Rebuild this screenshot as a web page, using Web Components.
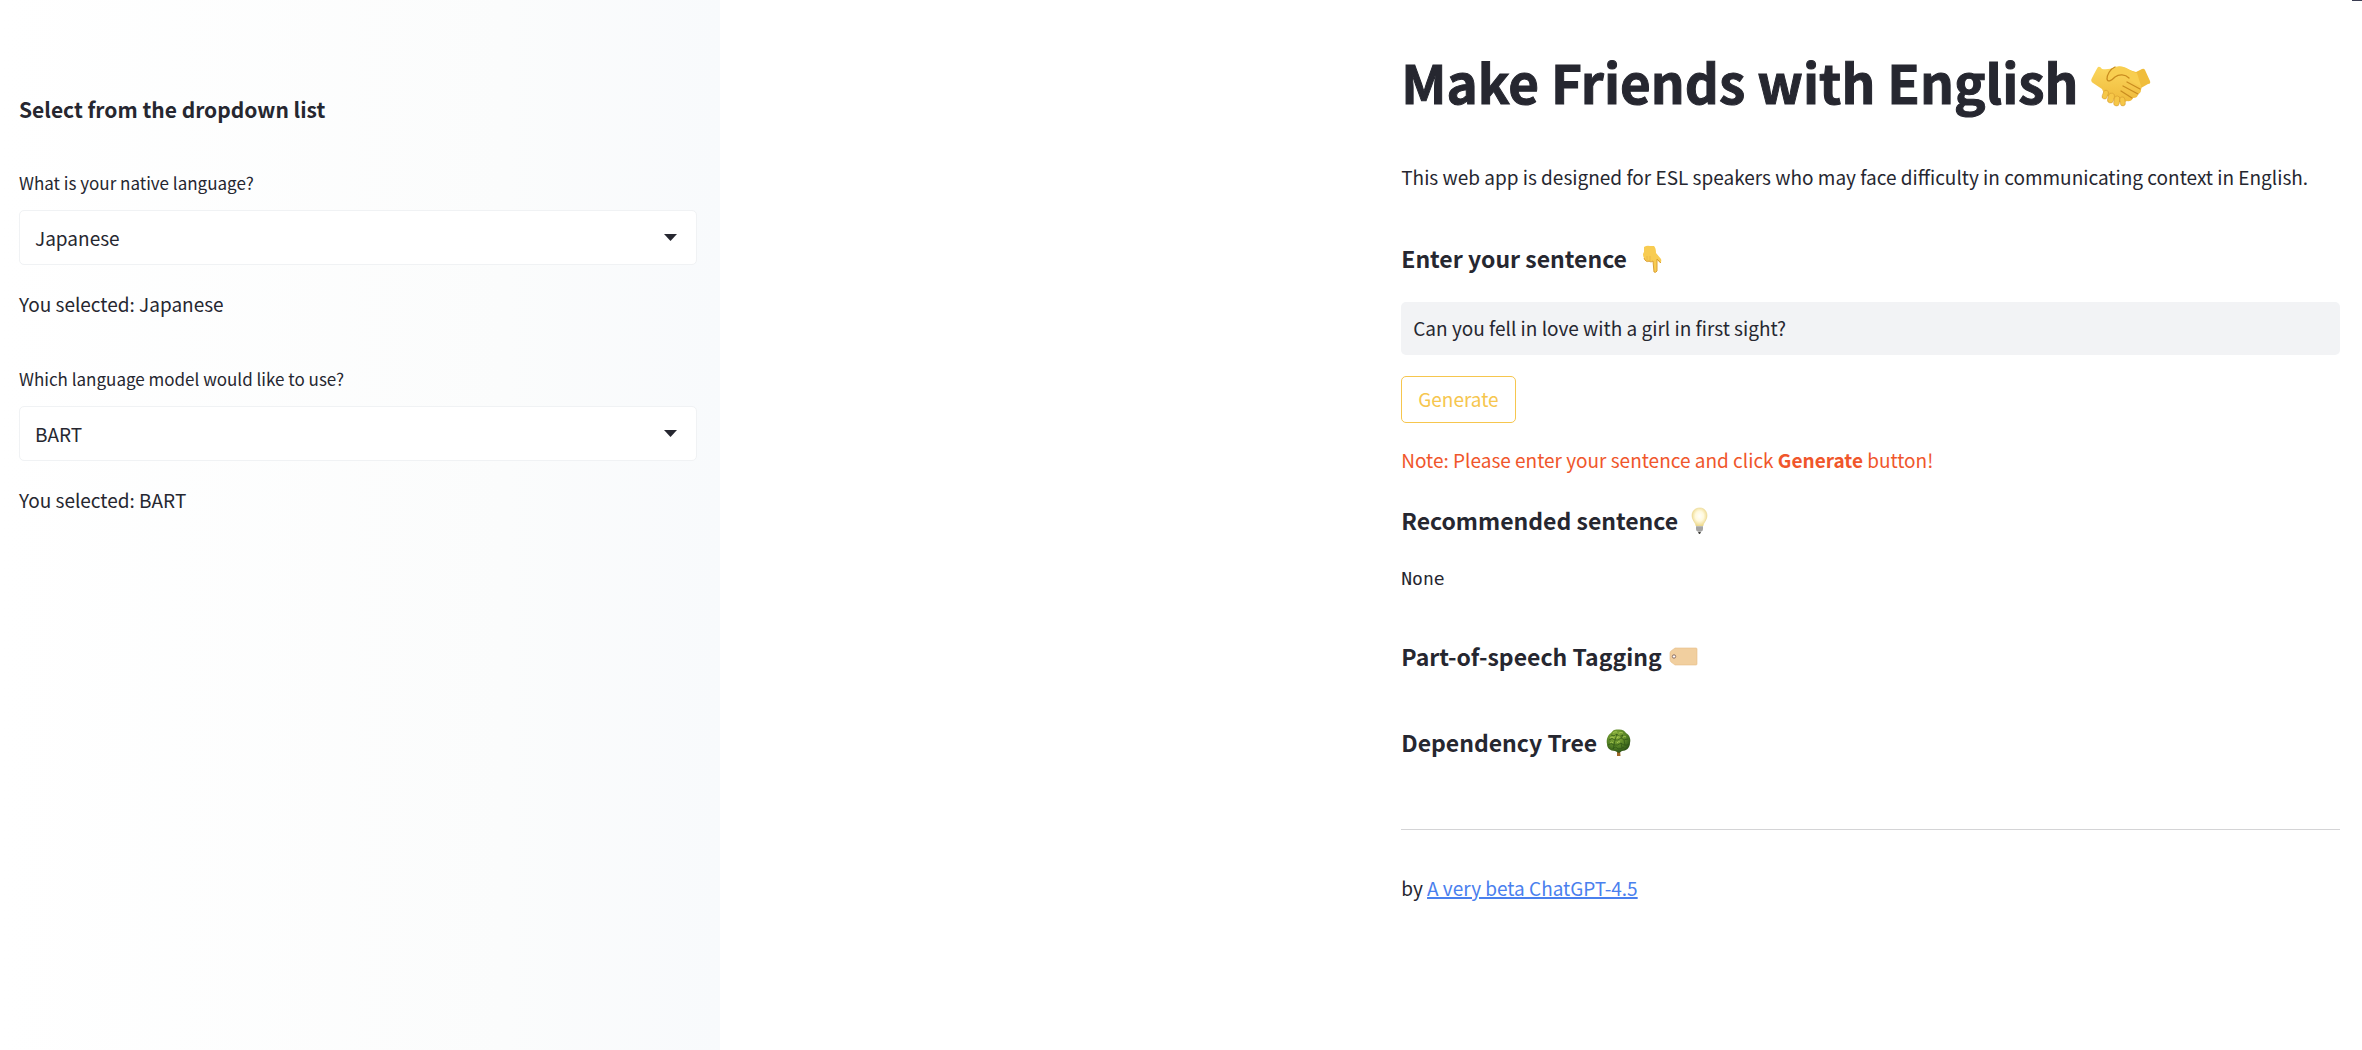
<!DOCTYPE html>
<html lang="en">
<head>
<meta charset="utf-8">
<title>Make Friends with English</title>
<style>
  html, body { margin: 0; min-height: 100%; }
  body {
    --ink: #262730;
    --gutter: 22px;
    background: #fff;
    color: var(--ink);
    font: 400 19px/32px "Noto Sans CJK JP", "Noto Sans", sans-serif;
  }
</style>
</head>
<body>
<friends-app></friends-app>

<script>
const ICONS = {
  handshake: `
    <defs><linearGradient id="g" x1="0" y1="0" x2="0" y2="1"><stop offset="0" stop-color="#fbd75e"/><stop offset="1" stop-color="#efb93a"/></linearGradient></defs>
    <path d="M35 13 45 16 51 13Q53 12 54 14L59 25Q60 28 57 28L50 32 48 36 38 32Z" fill="#f0bd3c"/>
    <path d="M1 22Q5 14 7 11Q9 10 11 13 18 14 24 11Q30 9 36 13L45 18 46 27Q52 30 50 34 50 37 47 38 47 42 42 42 40 46 36 45 33 47 28 46L15 39Q12 37 11 33L2 27Q-1 25 1 22Z" fill="url(#g)"/>
    <path d="M16 23C18 17 22 12 27 11 34 9 38 15 46 17L50 30C42 29 38 20 31 19 27 19 24 21 20 24Q16 26 16 23Z" fill="#f8ce50"/>
    <path d="M24 11C19 13 16 19 16 23 17 27 21 24 24 21 28 18 34 18 38 22M36 26 49 33M32 30 47 38M30 35 41 42" fill="none" stroke="#c98c1f" stroke-width="1.3" stroke-linecap="round"/>
    <g fill="#f6c748" stroke="#cf952a" stroke-width=".5"><rect x="12" y="34" width="5" height="9" rx="2.5" transform="rotate(20 14 38)"/><rect x="17" y="37" width="6" height="10" rx="3" transform="rotate(15 20 42)"/><rect x="23" y="40" width="5.5" height="10" rx="2.7" transform="rotate(8 26 45)"/><rect x="29" y="41" width="5" height="9" rx="2.5" transform="rotate(-8 31 45)"/></g>`,
  point: `
    <g transform="translate(4 0)"><path d="M5 2Q8 0 11 1L15 1Q17 3 17 8L22 14Q23 17 21 18L18 15 18 26Q17 28 15 27L14 16Q6 18 5 13 3 9 5 7Z" fill="#f8cc52"/>
    <path d="M5 13Q7 18 10 16 12 18 14 16L15 27Q17 28 18 26L18 14 22 18" fill="none" stroke="#dba034" stroke-width="1"/>
    <path d="M8 11V16M11 11V16" stroke="#e8b548" stroke-width=".8"/></g>`,
  bulb: `
    <defs><radialGradient id="g" cx=".5" cy=".45" r=".55"><stop offset="0" stop-color="#fffefa"/><stop offset=".5" stop-color="#fff9dc"/><stop offset="1" stop-color="#eed88b"/></radialGradient></defs>
    <path d="M14 1C9 1 6 4 6 9 6 13 10 16 10 19H17C17 16 21 13 21 9 21 4 18 1 14 1Z" fill="url(#g)" stroke="#ead68f" stroke-width=".6"/>
    <path d="M10 19H17V23L15 25H12L10 23Z" fill="#b9b9b7"/><path d="M10 21H17M10.500 23H16.500" stroke="#858585" stroke-width=".8"/><path d="M12 25H15L14 27H13Z" fill="#44433f"/>`,
  tag: `
    <path d="M5 5H26Q27 5 27 6V21Q27 22 26 22H5L1 19Q0 18 0 16V10Q0 9 1 8Z" fill="#f1cf9f" stroke="#e6bd88" stroke-width=".6"/>
    <circle cx="4" cy="13.500" r="1.700" fill="#fff" stroke="#8d6d60" stroke-width="1"/>`,
  tree: `
    <defs><radialGradient id="g" cx=".4" cy=".3" r=".75"><stop offset="0" stop-color="#91b63e"/><stop offset=".6" stop-color="#527f24"/><stop offset="1" stop-color="#254912"/></radialGradient></defs>
    <path d="M12 21H15L15.500 27H12Z" fill="#a0682a"/>
    <path d="M13 .5C17 0 20 2 21 4 25 6 26 11 25 14 25 19 21 22 17 22L14 24 10 22C5 22 2 19 2 15 1 10 3 6 6 4 8 1 10 0 13 .5Z" fill="url(#g)"/>
    <g fill="none" stroke="#2c5314" stroke-width=".7"><path d="M6 6Q9 8 12 5 13 9 18 6M4 11Q7 8 10 11 13 12 16 9 19 12 23 10M3 16Q6 13 9 16 13 17 16 14 20 18 24 15M8 20Q10 16 13 20 17 20 19 18M12 5 10 11M18 6 16 9M9 16 8 20M16 14 17 19M10 11 9 16M19 11 20 16"/></g>
    <g fill="none" stroke="#b0cf59" stroke-width=".8"><path d="M8 4Q10 2 12 3M14 4Q16 3 18 4M5 9Q7 7 9 9M12 9Q13 7 15 8M5 14Q7 12 8 14M12 14Q13 12 15 13M18 8Q20 7 21 8"/></g>`
};

const define = (name, html, setup) => {
  const template = document.createElement("template");
  template.innerHTML = `<style>*{box-sizing:border-box}:host{display:block}</style>` + html;
  customElements.define(name, class extends HTMLElement {
    connectedCallback() {
      if (this.shadowRoot) return;
      const root = this.attachShadow({ mode: "open" });
      root.append(template.content.cloneNode(true));
      if (setup) setup(this, root);
    }
  });
};

define("emoji-icon", `
  <style>
    :host { display: inline-block; width: 27px; height: 27px; margin-left: 3px; vertical-align: -4px; line-height: 0; }
    :host([name="handshake"]) { width: 60px; height: 60px; margin-left: 0; vertical-align: -12px; }
    svg { width: 100%; height: 100%; display: block; overflow: visible; }
  </style>
  <svg aria-hidden="true"></svg>`,
  (host, root) => {
    const name = host.getAttribute("name");
    const svg = root.querySelector("svg");
    svg.setAttribute("viewBox", name === "handshake" ? "0 0 60 60" : "0 0 27 27");
    svg.innerHTML = ICONS[name];
  });

define("page-title", `
  <style>h1 { margin: 0; font-size: 53px; line-height: 72px; font-weight: 700; -webkit-text-stroke: 1px currentColor; }</style>
  <h1><slot></slot></h1>`);

define("section-heading", `
  <style>h2 { margin: 0; font-size: 23px; line-height: 32px; font-weight: 700; }</style>
  <h2><slot></slot></h2>`);

define("select-field", `
  <style>
    label { display: block; font-size: 17px; line-height: 24px; margin-bottom: 15px; }
    .box { display: grid; align-items: center; margin-bottom: 23px; }
    select, svg { grid-area: 1 / 1; }
    select {
      appearance: none; width: 100%; height: 55px; margin: 0; padding: 0 40px 0 15px;
      border: 1px solid #f0f2f4; border-radius: 5px; background: #fff;
      color: inherit; font: inherit;
    }
    svg { justify-self: end; margin-right: 20px; width: 13px; height: 7px; pointer-events: none; }
    p { margin: 0; }
  </style>
  <label for="choice"></label>
  <div class="box">
    <select id="choice"></select>
    <svg viewBox="0 0 13 7" aria-hidden="true"><path d="M0 0H13L6.500 7Z" fill="#262730"/></svg>
  </div>
  <p>You selected: <span></span></p>`,
  (host, root) => {
    root.querySelector("label").textContent = host.getAttribute("label");
    const select = root.querySelector("select");
    const output = root.querySelector("span");
    select.add(new Option(host.getAttribute("value")));
    output.textContent = select.value;
    select.addEventListener("change", () => { output.textContent = select.value; });
  });

define("side-panel", `
  <style>
    :host { padding: 93px 23px 40px 19px; background: linear-gradient(90deg, #fff, #fbfcfc 70%, #f8fafc); }
    h2 { margin: 0 0 46px; font-size: 21px; line-height: 32px; font-weight: 700; }
    .fields { display: grid; gap: 47px; }
  </style>
  <h2>Select from the dropdown list</h2>
  <div class="fields">
    <select-field label="What is your native language?" value="Japanese"></select-field>
    <select-field label="Which language model would like to use?" value="BART"></select-field>
  </div>`);

define("sentence-form", `
  <style>
    form { margin: 0; display: flex; flex-direction: column; align-items: flex-start; gap: 21px; }
    input, button { font: inherit; margin: 0; border-radius: 5px; }
    input { width: 100%; height: 53px; padding: 0 12px 2px; border: 0; background: #f2f3f5; color: inherit; }
    button { height: 47px; padding: 0 16px 2px; border: 1px solid #f6c64e; background: #fff; color: #f6c64e; }
  </style>
  <form onsubmit="return false">
    <input type="text" aria-label="Enter your sentence" value="Can you fell in love with a girl in first sight?">
    <button type="submit">Generate</button>
  </form>`);

define("main-panel", `
  <style>
    :host { padding: 45px var(--gutter); }
    .columns { display: grid; grid-template-columns: 659fr 939fr; }
    .content { grid-column: 2; min-width: 0; }
    p { margin: 0; }
    .intro { margin: 44px 0 49px; }
    sentence-form { margin: 28px 0 21px; }
    .note { margin-bottom: 28px; color: #f0562b; }
    .result { margin: 31px 0 49px; font: 18px/24px "DejaVu Sans Mono", monospace; }
    .tagging { margin-bottom: 54px; }
    hr { margin: 71px 0 42px; border: 0; border-top: 1px solid #d4d4d6; }
    a { color: #4a80ee; text-decoration: underline; text-decoration-thickness: 2px; }
  </style>
  <div class="columns">
    <div class="content">
      <page-title>Make Friends with English <emoji-icon name="handshake"></emoji-icon></page-title>
      <p class="intro">This web app is designed for ESL speakers who may face difficulty in communicating context in English.</p>
      <section-heading>Enter your sentence <emoji-icon name="point"></emoji-icon></section-heading>
      <sentence-form></sentence-form>
      <p class="note">Note: Please enter your sentence and click <strong>Generate</strong> button!</p>
      <section-heading>Recommended sentence <emoji-icon name="bulb"></emoji-icon></section-heading>
      <p class="result">None</p>
      <section-heading class="tagging">Part-of-speech Tagging <emoji-icon name="tag"></emoji-icon></section-heading>
      <section-heading>Dependency Tree <emoji-icon name="tree"></emoji-icon></section-heading>
      <hr>
      <p>by <a href="#">A very beta ChatGPT-4.5</a></p>
    </div>
  </div>`);

define("friends-app", `
  <style>
    :host { display: flex; min-height: 100vh; position: relative; }
    side-panel { flex: 0 0 30.5%; }
    main-panel { flex: 1; min-width: 0; }
    .corner { position: absolute; top: 0; right: 0; width: 10px; height: 1px; background: #3b3d52; }
  </style>
  <side-panel></side-panel>
  <main-panel></main-panel>
  <div class="corner"></div>`);
</script>
</body>
</html>
